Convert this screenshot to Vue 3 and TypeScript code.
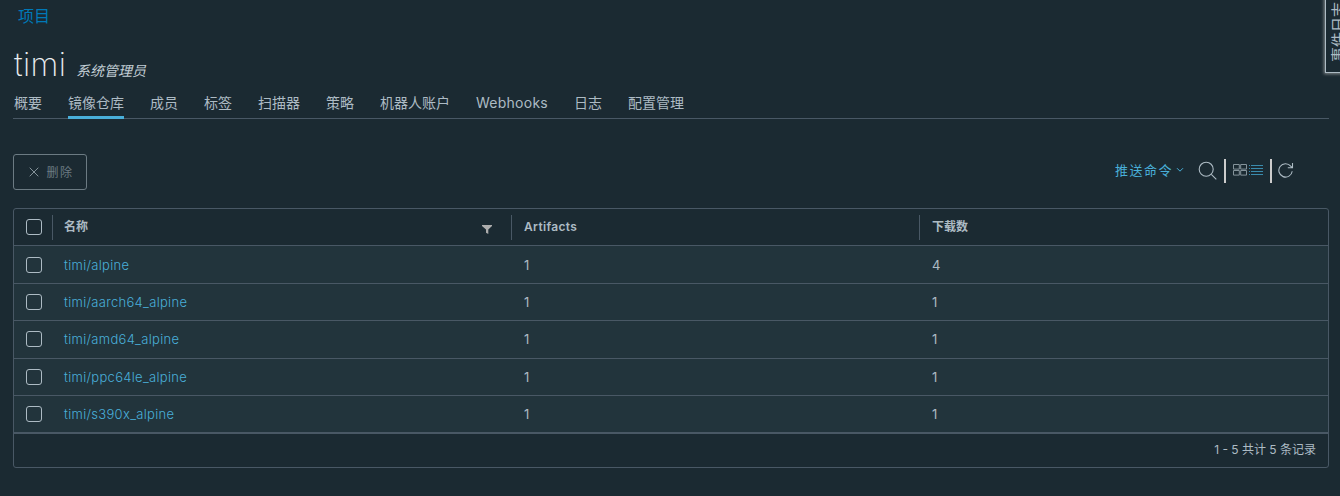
<script setup lang="ts">
interface Repository {
  name: string
  artifacts: number
  pulls: number
}

const tabs: string[] = ['概要', '镜像仓库', '成员', '标签', '扫描器', '策略', '机器人账户', 'Webhooks', '日志', '配置管理']
const activeTab = '镜像仓库'

const repositories: Repository[] = [
  { name: 'timi/alpine', artifacts: 1, pulls: 4 },
  { name: 'timi/aarch64_alpine', artifacts: 1, pulls: 1 },
  { name: 'timi/amd64_alpine', artifacts: 1, pulls: 1 },
  { name: 'timi/ppc64le_alpine', artifacts: 1, pulls: 1 },
  { name: 'timi/s390x_alpine', artifacts: 1, pulls: 1 },
]
</script>

<template>
  <main class="page">
    <a class="breadcrumb">项目</a>
    <header class="title">
      <h1>timi</h1>
      <em>系统管理员</em>
    </header>

    <nav class="tabs">
      <a v-for="tab in tabs" :key="tab" class="tab" :class="{ active: tab === activeTab, latin: tab === 'Webhooks' }">{{ tab }}</a>
    </nav>

    <section class="toolbar">
      <button class="delete" disabled>
        <svg width="10" height="10" viewBox="0 0 10 10"><path d="M.7.7l8.6 8.6M9.3.7L.7 9.3" /></svg>
        <span>删除</span>
      </button>
      <div class="actions">
        <a class="push">推送命令</a>
        <svg class="caret" width="8" height="6" viewBox="0 0 8 6"><path d="M1 1.2l3 3 3-3" /></svg>
        <svg class="search" width="20" height="20" viewBox="0 0 20 20"><circle cx="8.2" cy="8.2" r="7" /><path d="M13.3 13.3l5 5" /></svg>
        <i class="bar"></i>
        <svg class="cards" width="14" height="12" viewBox="0 0 14 12">
          <path d="M.5.5h5.8v4.6H.5zM7.7.5h5.8v4.6H7.7zM.5 6.5h5.8v4.6H.5zM7.7 6.5h5.8v4.6H7.7z" />
        </svg>
        <svg class="list" width="14" height="12" viewBox="0 0 14 12">
          <path d="M0 1.5h1M2 1.5h12M0 4.5h1M2 4.5h12M0 7.5h1M2 7.5h12M0 10.5h1M2 10.5h12" />
        </svg>
        <i class="bar"></i>
        <svg class="refresh" width="16" height="17" viewBox="0 0 16 17">
          <path d="M14.2 9.2a6.7 6.7 0 1 1-1.5-5.1l1.5 1.6M14.5 1v4.8H9.8" />
        </svg>
      </div>
    </section>

    <section class="grid">
      <div class="row head">
        <div class="check"><i class="box"></i></div>
        <div class="cell name">
          <span>名称</span>
          <svg class="filter" width="10" height="9" viewBox="0 0 10 9"><path d="M0 0h10v1L6.3 4.6V9L4 7.7V4.6L0 1z" /></svg>
        </div>
        <div class="cell latin">Artifacts</div>
        <div class="cell">下载数</div>
      </div>
      <div v-for="repo in repositories" :key="repo.name" class="row">
        <div class="check"><i class="box"></i></div>
        <div class="cell"><a>{{ repo.name }}</a></div>
        <div class="cell count">{{ repo.artifacts }}</div>
        <div class="cell count">{{ repo.pulls }}</div>
      </div>
      <footer class="foot">1 - 5 共计 5 条记录</footer>
    </section>

    <aside class="events"><span>事件日志</span></aside>
  </main>
</template>

<style>
body {
  background: #1b2a32;
  overflow: hidden;
}
</style>

<style scoped>
.page {
  position: relative;
  box-sizing: border-box;
  width: 1340px;
  height: 496px;
  padding: 0 11px 0 13px;
  overflow: hidden;
  background: #1b2a32;
  color: #adbbc4;
  font-family: Inter, "Noto Sans CJK SC", sans-serif;
  font-size: 13px;
}
svg {
  display: block;
  flex: none;
  fill: none;
  stroke: #adbbc4;
}
.breadcrumb {
  display: block;
  height: 32px;
  padding-left: 5px;
  color: #0079b8;
  font-size: 16px;
  line-height: 32px;
}
.title {
  display: flex;
  align-items: baseline;
  height: 54px;
  line-height: 66px;
}
h1 {
  width: 63px;
  margin: 0;
  color: #eaedf0;
  font-size: 32px;
  font-family: Inter, sans-serif;
  font-weight: 250;
  letter-spacing: 0.4px;
  text-indent: 1px;
  white-space: nowrap;
}
em {
  color: #c1cdd4;
  font-size: 14px;
}
.tabs {
  display: flex;
  gap: 26px;
  height: 33px;
  padding-left: 1px;
  box-shadow: inset 0 -1px #495865;
}
.tab {
  height: 33px;
  font-size: 14px;
  line-height: 33px;
  white-space: nowrap;
}
.tab.latin {
  width: 72px;
  letter-spacing: 0.25px;
}
.tab.active {
  box-shadow: inset 0 -3px #49afd9;
}
.toolbar {
  display: flex;
  align-items: center;
  justify-content: space-between;
  height: 36px;
  margin-top: 35px;
}
.delete {
  display: flex;
  align-items: center;
  gap: 8px;
  box-sizing: border-box;
  width: 74px;
  height: 36px;
  padding: 0 0 0 15px;
  border: 1px solid #6c7b83;
  border-radius: 3px;
  background: none;
  color: #6c7b83;
  font: 12px Inter, "Noto Sans CJK SC", sans-serif;
  letter-spacing: 1.5px;
}
.delete svg {
  stroke: #85939a;
}
.delete span {
  margin: -1px 0 0 -0.5px;
}
.actions {
  display: flex;
  align-items: center;
  padding-right: 35px;
  margin-top: -3px;
}
.push {
  margin-top: -2px;
  color: #49afd9;
  font-size: 13px;
  letter-spacing: 1.5px;
}
.caret {
  margin: -1px 14px 0 3px;
  stroke: #49afd9;
}
.search {
  margin-right: 6px;
  stroke-width: 1.1;
}
.bar {
  width: 2px;
  height: 24px;
  background: #ccc;
}
.cards {
  margin: -1px 0 0 7px;
  stroke: #85939a;
}
.list {
  margin: -1px 7px 0 2px;
  stroke: #3a8bad;
}
.refresh {
  margin-left: 6px;
  stroke-width: 1.1;
}
.grid {
  box-sizing: border-box;
  height: 260px;
  margin-top: 18px;
  border: 1px solid #495865;
  border-radius: 3px;
  overflow: hidden;
}
.row {
  display: grid;
  grid-template-columns: 38px 459px 408px 1fr;
  box-sizing: border-box;
  height: 37px;
  border-bottom: 1px solid #495865;
  background: #22343c;
}
.row:nth-child(2),
.row:nth-child(4) {
  height: 38px;
}
.row:nth-child(2) {
  padding-top: 1px;
}
.head {
  background: none;
  font-size: 12px;
  font-weight: 600;
}
.check {
  padding: 10px 0 0 12px;
}
.box {
  display: block;
  box-sizing: border-box;
  width: 16px;
  height: 16px;
  border: 1px solid #adbbc4;
  border-radius: 3px;
}
.cell {
  display: flex;
  justify-content: space-between;
  height: 36px;
  padding-left: 12px;
  line-height: 36px;
}
.count {
  padding-left: 13px;
}
.head .cell {
  height: 25px;
  margin-top: 6px;
  line-height: 24px;
  border-left: 1px solid #495865;
}
.head .name {
  padding-left: 11px;
}
.head .latin {
  letter-spacing: 0.35px;
}
.filter {
  margin: 10px 19px 0 0;
  fill: #adadad;
  stroke: none;
}
.cell a {
  color: #49afd9;
  font-weight: 350;
  letter-spacing: 0.3px;
}
.foot {
  height: 34px;
  padding-right: 12px;
  border-top: 1px solid #495865;
  font-size: 12px;
  line-height: 32px;
  text-align: right;
}
.events {
  position: absolute;
  top: -20px;
  left: 1325px;
  box-sizing: border-box;
  width: 40px;
  height: 93px;
  border: 1px solid #adbbc4;
  box-shadow: 0 0 3px 1px #83888b;
  background: #1b2a32;
}
.events span {
  position: absolute;
  right: 14px;
  bottom: 10px;
  writing-mode: vertical-rl;
  transform: rotate(180deg);
  text-orientation: sideways;
  font-size: 15px;
  line-height: 22px;
  white-space: nowrap;
}
</style>
